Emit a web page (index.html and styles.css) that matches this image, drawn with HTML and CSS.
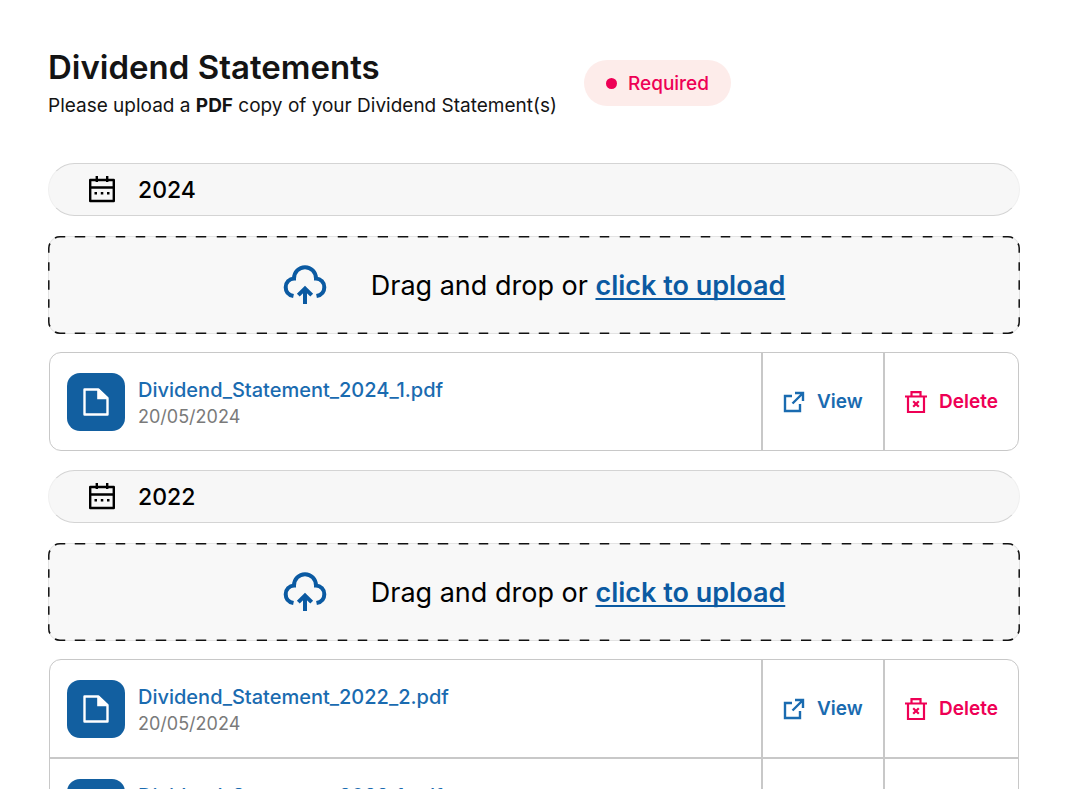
FILE: index.html
```html
<!DOCTYPE html>
<html lang="en">
<head>
<meta charset="utf-8">
<meta name="viewport" content="width=device-width, initial-scale=1">
<title>Dividend Statements</title>
<link rel="stylesheet" href="styles.css">
</head>
<body>

<!-- icons -->
<svg class="sprite" aria-hidden="true">
	<symbol id="calendar" viewBox="0 0 28 28">
		<path d="M2.2 4h23.6v21H2.2zM2.2 11.5h23.6M8.8 0v6M19.2 0v6" fill="none" stroke="currentColor" stroke-width="2.4" stroke-linejoin="round"/>
		<path d="M6.5 16h2.5v2.5H6.5zM12.8 16h2.5v2.5h-2.5zM19 16h2.5v2.5h-2.5z" fill="currentColor"/>
	</symbol>
	<symbol id="cloud" viewBox="0 0 44 40">
		<path d="M10.5 31C5.5 30 2.7 26.5 2.7 22.2C2.7 17.5 6.2 13.8 11 13.6C11 7 16 2.2 22 2.2S33 7 33 13.6C37.8 13.8 41.3 17.5 41.3 22.2C41.3 26.5 38.5 30 33.5 31M22 39V24M15.3 30.2L22 23.5L28.7 30.2" fill="none" stroke="currentColor" stroke-width="4"/>
	</symbol>
	<symbol id="file" viewBox="0 0 28 30">
		<path d="M2.5 2.5H16.5L25.5 11V27.5H2.5z" fill="none" stroke="currentColor" stroke-width="2.4" stroke-linejoin="round"/>
		<path d="M15.2 2H17L26 11V12.2H15.2z" fill="currentColor"/>
	</symbol>
	<symbol id="open" viewBox="0 0 22 22">
		<path d="M9 5H2V20H17V13M9.5 12.5L19.5 2.5M12 2H20V10" fill="none" stroke="currentColor" stroke-width="2.4"/>
	</symbol>
	<symbol id="trash" viewBox="0 0 22 22">
		<path d="M3 5.5V21H19V5.5M0 5.5H22M6.5 5V1.2H15.5V5M8.2 10.2L13.8 15.8M13.8 10.2L8.2 15.8" fill="none" stroke="currentColor" stroke-width="2.2"/>
	</symbol>
</svg>

<div class="container">
	<header class="header">
		<div>
			<h1>Dividend Statements</h1>
			<p>Please upload a <strong>PDF</strong> copy of your Dividend Statement(s)</p>
		</div>
		<span class="badge">Required</span>
	</header>

	<section>
		<h2 class="year"><svg><use href="#calendar"/></svg>2024</h2>
		<div class="dropzone">
			<svg><use href="#cloud"/></svg>
			<p>Drag and drop or <a href="#">click to upload</a></p>
		</div>
		<ul class="files">
			<li>
				<div class="file">
					<span class="thumb"><svg><use href="#file"/></svg></span>
					<div class="info">
						<a href="#">Dividend_Statement_2024_1.pdf</a>
						<p>20/05/2024</p>
					</div>
				</div>
				<a class="action view" href="#"><svg><use href="#open"/></svg>View</a>
				<button class="action delete" type="button"><svg><use href="#trash"/></svg>Delete</button>
			</li>
		</ul>
	</section>

	<section>
		<h2 class="year"><svg><use href="#calendar"/></svg>2022</h2>
		<div class="dropzone">
			<svg><use href="#cloud"/></svg>
			<p>Drag and drop or <a href="#">click to upload</a></p>
		</div>
		<ul class="files">
			<li>
				<div class="file">
					<span class="thumb"><svg><use href="#file"/></svg></span>
					<div class="info">
						<a href="#">Dividend_Statement_2022_2.pdf</a>
						<p>20/05/2024</p>
					</div>
				</div>
				<a class="action view" href="#"><svg><use href="#open"/></svg>View</a>
				<button class="action delete" type="button"><svg><use href="#trash"/></svg>Delete</button>
			</li>
			<li>
				<div class="file">
					<span class="thumb"><svg><use href="#file"/></svg></span>
					<div class="info">
						<a href="#">Dividend_Statement_2022_1.pdf</a>
						<p>20/05/2024</p>
					</div>
				</div>
				<a class="action view" href="#"><svg><use href="#open"/></svg>View</a>
				<button class="action delete" type="button"><svg><use href="#trash"/></svg>Delete</button>
			</li>
		</ul>
	</section>
</div>

</body>
</html>
```
FILE: styles.css
```css
* { margin: 0; padding: 0; box-sizing: border-box; }
body { background: #fff; color: #141414; font-family: Inter, "Liberation Sans", sans-serif; }
ul { list-style: none; }
a { color: #1a6bb0; text-decoration: none; }
svg { flex: none; }
.sprite { display: none; }
.container { padding: 44px 48px; }

/* header */
.header { display: flex; align-items: flex-start; gap: 27px; margin-bottom: 41px; }
.header h1 { font-size: 33px; line-height: 46px; font-weight: 600; }
.header p { font-size: 19px; line-height: 32px; }
.badge { display: flex; align-items: center; gap: 11px; height: 46px; margin-top: 16px; padding: 0 22px; border-radius: 23px; background: #fdecea; color: #ee0055; font-size: 19px; font-weight: 500; }
.badge:before { content: ""; width: 11px; height: 11px; border-radius: 50%; background: #ee0055; }

/* year bar */
.year { display: flex; align-items: center; gap: 22px; height: 53px; padding: 0 39px; margin-bottom: 20px; border: 1px solid #d4d4d4; border-left-color: #f0f0f0; border-right-color: #f0f0f0; border-radius: 27px; background: #f7f7f7; color: #000; font-size: 23px; font-weight: 500; }
.year svg { width: 28px; height: 28px; }

/* upload area, the border tile holds the corners and one dash on each side */
.dropzone { display: flex; align-items: center; justify-content: center; gap: 44px; height: 98px; margin-bottom: 18px; border: 12px solid transparent; border-radius: 12px; background: #f8f8f8 border-box; color: #000; font-size: 27px;
	border-image: url("data:image/svg+xml,%3Csvg xmlns='http://www.w3.org/2000/svg' width='44' height='42' fill='none'%3E%3Crect x='.5' y='.5' width='43' height='41' rx='12' stroke='%23e4e4e4'/%3E%3Cpath d='M7 2Q9 .8 12 .8H17M27 .8H32Q35 .8 37 2M42 7.5Q43.2 9.5 43.2 12V16.5M43.2 25.5V30Q43.2 32.5 42 34.5M37 40Q35 41.2 32 41.2H27M17 41.2H12Q9 41.2 7 40M2 34.5Q.8 32.5 .8 30V25.5M.8 16.5V12Q.8 9.5 2 7.5' stroke='%23111' stroke-width='1.5'/%3E%3C/svg%3E") 12 round; }
.dropzone svg { width: 44px; height: 40px; color: #0b5aa2; }
.dropzone a { color: #0b5aa2; font-weight: 600; text-decoration: underline; text-decoration-thickness: 2px; text-underline-offset: 3px; text-decoration-skip-ink: none; }

/* file list */
.files { margin: 0 1px 19px; border: 1px solid #c8c8c8; border-radius: 12px; overflow: hidden; }
.files li { display: flex; height: 97px; }
.files li + li { height: 99px; border-top: 2px solid #c8c8c8; }
.file { display: flex; flex: 1; align-items: center; gap: 13px; padding: 0 17px; line-height: 26px; }
.info { padding-top: 4px; }
.info a { font-size: 20px; font-weight: 500; }
.info p { color: #7a7a7a; font-size: 18px; }
.thumb { display: flex; align-items: center; justify-content: center; width: 58px; height: 58px; border-radius: 13px; background: #125fa0; color: #fff; }
.thumb svg { width: 28px; height: 30px; }
.action { display: flex; align-items: center; gap: 12px; width: 122px; padding: 0 20px; border: 0; border-left: 2px solid #c8c8c8; background: none; color: #1a6bb0; font-family: inherit; font-size: 19px; font-weight: 600; cursor: pointer; }
.action svg { width: 22px; height: 22px; }
.delete { width: 135px; color: #ee0055; }
```
